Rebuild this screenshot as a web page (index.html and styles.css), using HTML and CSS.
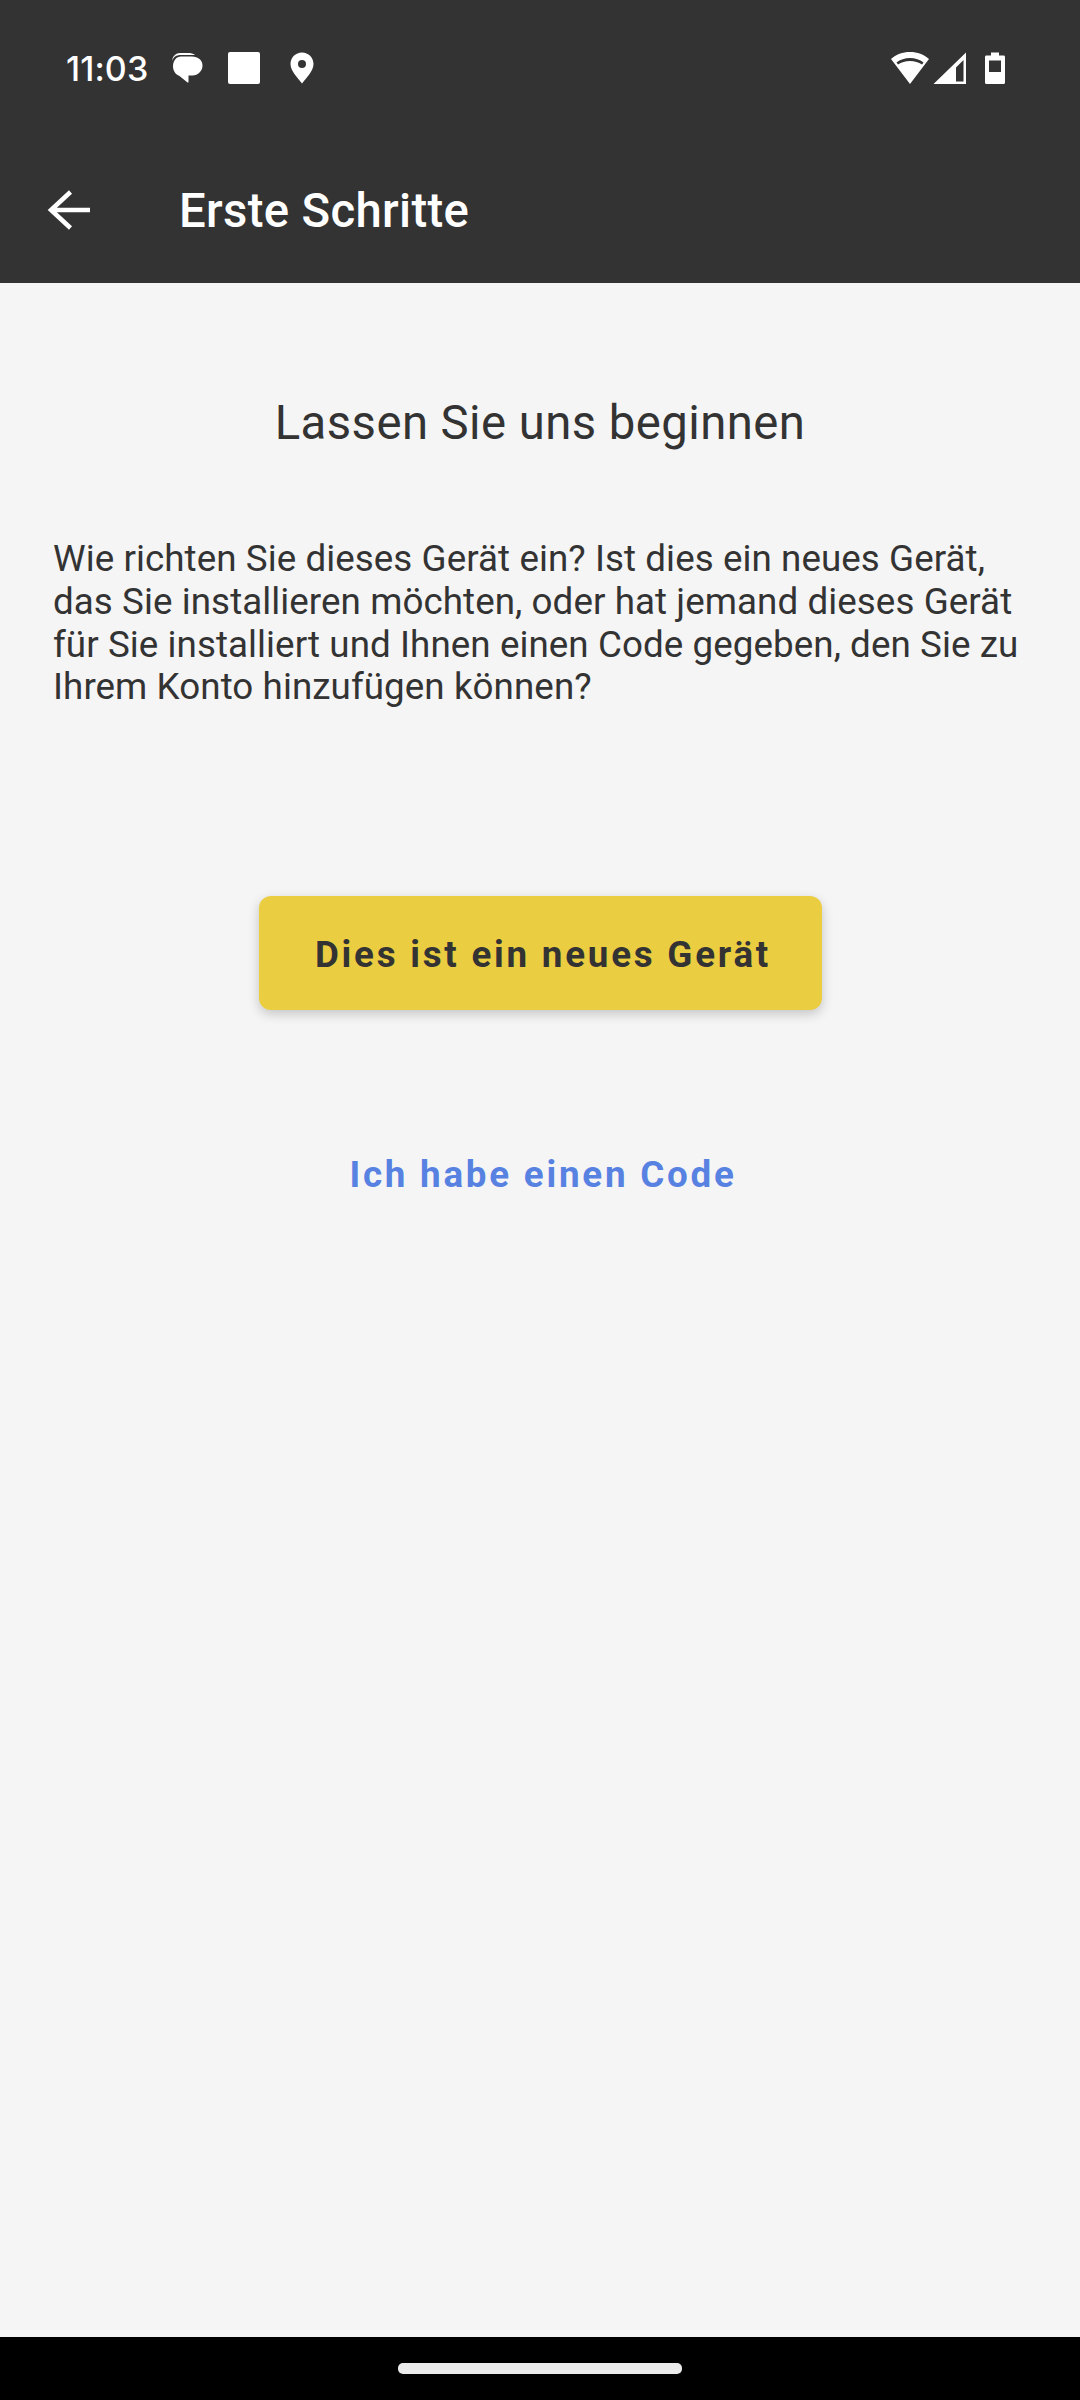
FILE: index.html
```html
<!DOCTYPE html>
<html lang="de">
<head>
<meta charset="utf-8">
<title>Erste Schritte</title>
<link rel="stylesheet" href="styles.css">
</head>
<body>
<div class="screen">
  <header class="appbar">
    <div class="status">
      <div class="status-left">
        <span class="time">11:03</span>
        <svg class="ic-chat" viewBox="0 0 32 32" width="32" height="32"><path fill="#fff" d="M1 9C1.500 4 5 1 9 1h8c3 0 5 .5 7 2H10C5 3 2.500 5 1 9z"/><path fill="#fff" d="M10 4.500h11c6 0 10.500 3.500 10.500 9s-4.500 10-10 10h-4v6.500c0 .6-.5.8-1 .4L8.500 24C4.500 22.500 2 18.500 2 14.500 2 8.500 5.500 4.500 10 4.500z"/></svg>
        <span class="ic-square"></span>
        <svg class="ic-pin" viewBox="0 0 24 32" width="24" height="32"><path fill="#fff" fill-rule="evenodd" d="M12 .5C5.600.5.500 5.600.500 12c0 3.700 2 7.300 4.300 10.400 2 2.700 4.500 5.600 7.200 9.100 2.700-3.500 5.200-6.400 7.200-9.100 2.300-3.100 4.300-6.700 4.300-10.400C23.500 5.600 18.400.5 12 .5zm0 7.500a4 4 0 1 1 0 8 4 4 0 0 1 0-8z"/></svg>
      </div>
      <div class="status-right">
        <svg class="ic-wifi" viewBox="0 0 40 34" width="40" height="34"><path fill="#fff" fill-rule="evenodd" d="M20 1C12.500 1 6 3.500 1 8l19 25L39 8C34 3.500 27.500 1 20 1zm0 6c-5 0-10 1.500-13.500 4.500l1.500 2c3.200-2.300 7.500-3.500 12-3.500s8.800 1.200 12 3.500l1.500-2C30 8.500 25 7 20 7z"/></svg>
        <svg class="ic-signal" viewBox="0 0 34 34" width="34" height="34"><path fill="#fff" fill-rule="evenodd" d="M33 1.500V33H0.500zM30.500 9 23 16.500V30.500h7.500z"/></svg>
        <svg class="ic-battery" viewBox="0 0 22 34" width="22" height="34"><path fill="#fff" fill-rule="evenodd" d="M7 1.500h8v3h4.500c1 0 1.500.7 1.500 1.500v25.500c0 .9-.6 1.500-1.500 1.500h-17C1.600 33 1 32.400 1 31.500V6c0-.8.500-1.500 1.500-1.500H7zM5 9.500v11.500h12V9.500z"/></svg>
      </div>
    </div>
    <div class="toolbar">
      <svg class="ic-back" viewBox="0 0 44 44" width="44" height="44"><path fill="none" stroke="#fff" stroke-width="4.500" d="M44 22H5M24.500 4 5 22l19.500 18"/></svg>
      <h1 class="title">Erste Schritte</h1>
    </div>
  </header>
  <main class="content">
    <h2 class="heading">Lassen Sie uns beginnen</h2>
    <p class="body-text">Wie richten Sie dieses Gerät ein? Ist dies ein neues Gerät, das Sie installieren möchten, oder hat jemand dieses Gerät für Sie installiert und Ihnen einen Code gegeben, den Sie zu Ihrem Konto hinzufügen können?</p>
    <button class="btn-primary" type="button">Dies ist ein neues Gerät</button>
    <button class="btn-link" type="button">Ich habe einen Code</button>
  </main>
  <footer class="navbar"><span class="handle"></span></footer>
</div>
</body>
</html>
```
FILE: styles.css
```css
* { box-sizing: border-box; }
html, body { margin: 0; padding: 0; }
body { font-family: Roboto, "Noto Sans", sans-serif; background: #f5f5f5; }
.screen { width: 1080px; height: 2400px; display: flex; flex-direction: column; overflow: hidden; }

.appbar { height: 283px; background: #333333; color: #fff; flex: none; }
.status { height: 136px; padding: 0 74px 0 66px; display: flex; justify-content: space-between; align-items: flex-start; }
.status-left { display: flex; align-items: center; height: 136px; }
.time { font-family: Inter, Roboto, sans-serif; font-size: 34px; font-weight: 500; letter-spacing: 0.1px; width: 105px; }
.ic-square { display: block; width: 32px; height: 32px; background: #fff; border-radius: 2px; margin-left: 25px; }
.ic-pin { margin-left: 30px; }
.status-right { display: flex; align-items: center; height: 135px; }
.ic-wifi { margin-right: 3px; }
.ic-signal { margin-right: 17px; }

.toolbar { height: 147px; display: flex; align-items: center; padding-left: 46px; }
.ic-back { flex: none; }
.title { margin: 2px 0 0 89px; font-size: 47.25px; font-weight: 500; letter-spacing: 0.33px; line-height: 56px; color: #fff; }

.content { flex: 1; display: flex; flex-direction: column; align-items: center; padding: 0 53px; color: #333; }
.heading { margin: 112px 0 0; font-size: 47.25px; font-weight: 400; letter-spacing: 0.45px; line-height: 56px; text-align: center; }
.body-text { margin: 87px 0 0; width: 100%; font-size: 36.75px; letter-spacing: 0.07px; line-height: 42.75px; }
.btn-primary { margin-top: 187px; width: 563px; height: 114px; padding: 2px 0 0 6px; border: none; border-radius: 12px; background: #ebcd41; color: #333; font: 700 36.75px Roboto, sans-serif; letter-spacing: 2.77px; box-shadow: 0 4px 12px rgba(0,0,0,.2); }
.btn-link { margin-top: 143px; margin-left: 6px; border: none; background: none; padding: 0; color: #5882e2; font: 700 36.75px Roboto, sans-serif; letter-spacing: 2.77px; }

.navbar { height: 63px; flex: none; background: #000; display: flex; justify-content: center; align-items: center; }
.handle { display: block; width: 284px; height: 11px; border-radius: 5px; background: #ebebeb; }
```
